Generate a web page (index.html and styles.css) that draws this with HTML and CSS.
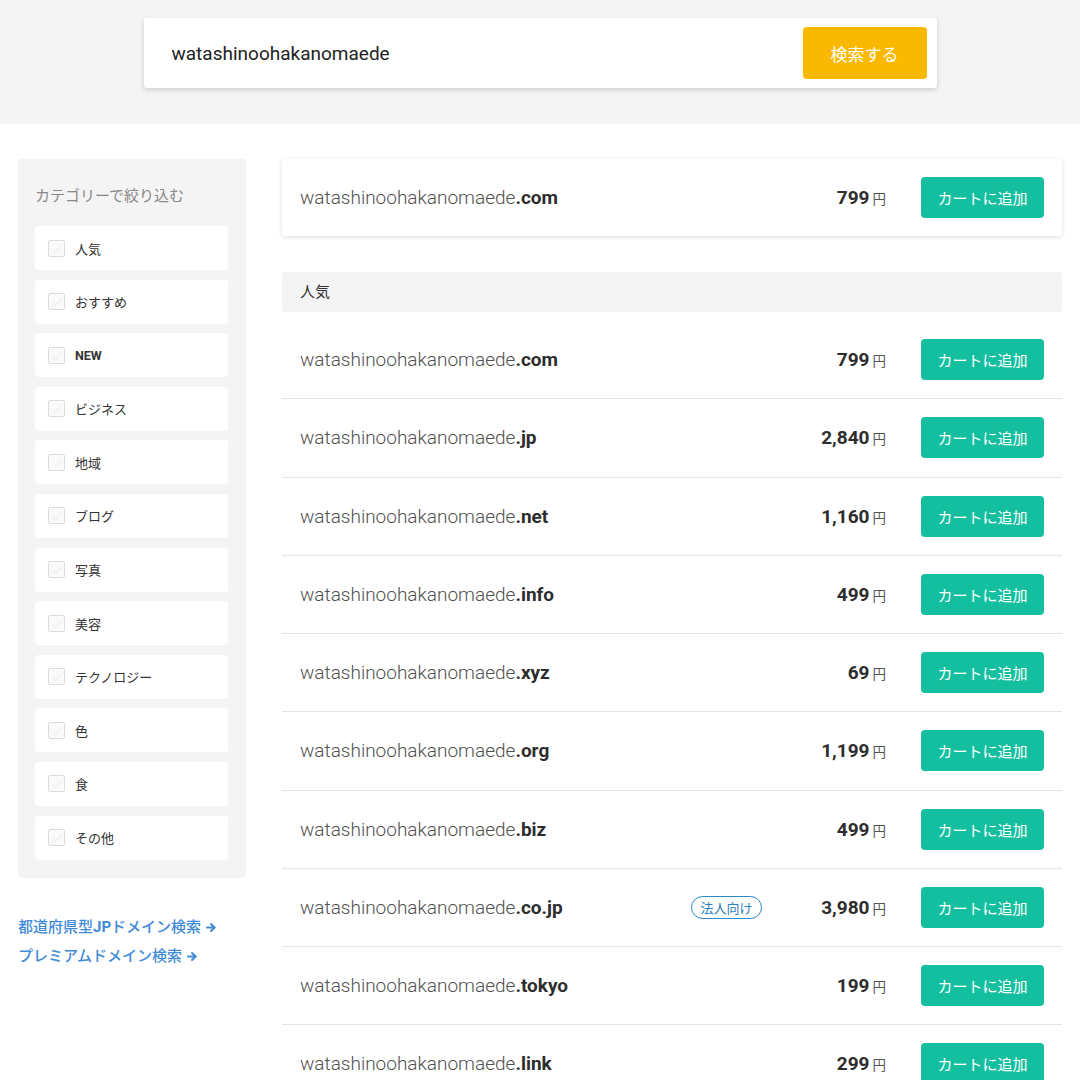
FILE: index.html
```html
<!DOCTYPE html>
<html lang="ja">
<head>
<meta charset="utf-8">
<link rel="stylesheet" href="styles.css">
</head>
<body>
<header class="top">
  <div class="search">
    <span class="query">watashinoohakanomaede</span>
    <button class="search-btn">検索する</button>
  </div>
</header>
<div class="layout">
  <aside class="side">
    <div class="filter">
      <div class="filter-title">カテゴリーで絞り込む</div>
      <ul class="cats">
        <li class="cat"><span class="cb"></span>人気</li>
        <li class="cat"><span class="cb"></span>おすすめ</li>
        <li class="cat bold"><span class="cb"></span>NEW</li>
        <li class="cat"><span class="cb"></span>ビジネス</li>
        <li class="cat"><span class="cb"></span>地域</li>
        <li class="cat"><span class="cb"></span>ブログ</li>
        <li class="cat"><span class="cb"></span>写真</li>
        <li class="cat"><span class="cb"></span>美容</li>
        <li class="cat"><span class="cb"></span>テクノロジー</li>
        <li class="cat"><span class="cb"></span>色</li>
        <li class="cat"><span class="cb"></span>食</li>
        <li class="cat"><span class="cb"></span>その他</li>
      </ul>
    </div>
    <div class="links">
      <a class="link">都道府県型<b>JP</b>ドメイン検索 <svg class="arr" viewBox="0 0 12 12" width="11" height="11"><path d="M1 6h8M5.5 2.2L9.5 6l-4 3.8" fill="none" stroke="currentColor" stroke-width="2.2" stroke-linecap="round" stroke-linejoin="round"/></svg></a>
      <a class="link">プレミアムドメイン検索 <svg class="arr" viewBox="0 0 12 12" width="11" height="11"><path d="M1 6h8M5.5 2.2L9.5 6l-4 3.8" fill="none" stroke="currentColor" stroke-width="2.2" stroke-linecap="round" stroke-linejoin="round"/></svg></a>
    </div>
  </aside>
  <main class="main">
    <div class="row featured">
      <div class="domain">watashinoohakanomaede<b>.com</b></div>
      <div class="price"><b>799</b><span class="yen">円</span></div>
      <button class="cart">カートに追加</button>
    </div>
    <div class="section">人気</div>
    <div class="list">
      <div class="row"><div class="domain">watashinoohakanomaede<b>.com</b></div><div class="price"><b>799</b><span class="yen">円</span></div><button class="cart">カートに追加</button></div>
      <div class="row"><div class="domain">watashinoohakanomaede<b>.jp</b></div><div class="price"><b>2,840</b><span class="yen">円</span></div><button class="cart">カートに追加</button></div>
      <div class="row"><div class="domain">watashinoohakanomaede<b>.net</b></div><div class="price"><b>1,160</b><span class="yen">円</span></div><button class="cart">カートに追加</button></div>
      <div class="row"><div class="domain">watashinoohakanomaede<b>.info</b></div><div class="price"><b>499</b><span class="yen">円</span></div><button class="cart">カートに追加</button></div>
      <div class="row"><div class="domain">watashinoohakanomaede<b>.xyz</b></div><div class="price"><b>69</b><span class="yen">円</span></div><button class="cart">カートに追加</button></div>
      <div class="row"><div class="domain">watashinoohakanomaede<b>.org</b></div><div class="price"><b>1,199</b><span class="yen">円</span></div><button class="cart">カートに追加</button></div>
      <div class="row"><div class="domain">watashinoohakanomaede<b>.biz</b></div><div class="price"><b>499</b><span class="yen">円</span></div><button class="cart">カートに追加</button></div>
      <div class="row"><div class="domain">watashinoohakanomaede<b>.co.jp</b></div><span class="badge">法人向け</span><div class="price"><b>3,980</b><span class="yen">円</span></div><button class="cart">カートに追加</button></div>
      <div class="row"><div class="domain">watashinoohakanomaede<b>.tokyo</b></div><div class="price"><b>199</b><span class="yen">円</span></div><button class="cart">カートに追加</button></div>
      <div class="row"><div class="domain">watashinoohakanomaede<b>.link</b></div><div class="price"><b>299</b><span class="yen">円</span></div><button class="cart">カートに追加</button></div>
    </div>
  </main>
</div>
</body>
</html>
```
FILE: styles.css
```css
* { box-sizing: border-box; }
html, body { margin: 0; padding: 0; background: #fff; }
body {
  font-family: Roboto, "Noto Sans CJK JP", sans-serif;
  color: #333;
  overflow: hidden;
  height: 1080px;
}
.top {
  background: #f4f4f4;
  height: 124px;
  padding-top: 18px;
}
.search {
  width: 793px;
  height: 70px;
  margin: 0 auto;
  background: #fff;
  border-radius: 3px;
  box-shadow: 0 2px 5px rgba(0,0,0,0.16);
  display: flex;
  align-items: center;
  padding: 0 10px 0 28px;
}
.query {
  flex: 1;
  font-size: 19px;
  color: #222;
}
.search-btn {
  width: 124px;
  height: 52px;
  border: 0;
  border-radius: 4px;
  background: #fbb800;
  color: #fff;
  font-family: Roboto, "Noto Sans CJK JP", sans-serif;
  font-size: 17px;
}
.layout {
  display: flex;
  gap: 36px;
  padding: 35px 18px 0 18px;
}
.side { width: 228px; flex: none; }
.filter {
  background: #f4f4f4;
  border-radius: 3px;
  padding: 26px 18px 18px 17px;
}
.filter-title {
  font-size: 15px;
  line-height: 22px;
  color: #888;
  margin-bottom: 19px;
}
.cats {
  list-style: none;
  margin: 0;
  padding: 0;
  display: flex;
  flex-direction: column;
  gap: 9.6px;
}
.cat {
  height: 44px;
  background: #fff;
  border-radius: 4px;
  display: flex;
  align-items: center;
  padding-left: 13px;
  font-size: 13px;
  color: #333;
}
.cat.bold { font-weight: 700; font-size: 12.5px; }
.cb {
  width: 17px;
  height: 17px;
  border: 1px solid #dcdcdc;
  border-radius: 2px;
  background: #fafafa;
  margin-right: 10px;
  position: relative;
}
.cb::after {
  content: "";
  position: absolute;
  left: 5px;
  top: 2px;
  width: 4px;
  height: 8px;
  border: solid #f3f3f3;
  border-width: 0 2px 2px 0;
  transform: rotate(45deg);
}
.links {
  margin-top: 35px;
  display: flex;
  flex-direction: column;
}
.link {
  font-size: 15px;
  line-height: 29px;
  color: #3f8bd8;
  font-weight: 500;
  display: flex;
  align-items: center;
}
.link b { font-weight: 700; }
.arr { margin-left: 5px; }
.main { width: 780px; flex: none; }
.row {
  display: flex;
  align-items: center;
  height: 78.25px;
  padding: 0 18px;
  border-bottom: 1px solid #e6e6e6;
}
.featured {
  height: 77px;
  border-bottom: 0;
  border-radius: 3px;
  box-shadow: 0 1px 5px rgba(0,0,0,0.14);
}
.domain {
  flex: 1;
  font-size: 19px;
  font-weight: 300;
  color: #505050;
}
.domain b { color: #2d2d2d; font-weight: 700; }
.price {
  width: 110px;
  text-align: right;
  margin-right: 35px;
  font-size: 19px;
  color: #2d2d2d;
}
.price b { font-weight: 700; }
.yen {
  font-size: 13.5px;
  color: #555;
  margin-left: 3px;
}
.cart {
  width: 123px;
  height: 41px;
  border: 0;
  border-radius: 4px;
  background: #14bf9f;
  color: #fff;
  font-family: Roboto, "Noto Sans CJK JP", sans-serif;
  font-size: 15px;
}
.section {
  margin-top: 36px;
  height: 40px;
  background: #f4f4f4;
  border-radius: 3px;
  padding-left: 18px;
  padding-bottom: 3px;
  display: flex;
  align-items: center;
  font-size: 15px;
  color: #333;
}
.list { margin-top: 9px; }
.badge {
  width: 71px;
  height: 23px;
  border: 1.5px solid #2a86c4;
  border-radius: 12px;
  color: #2a7fb8;
  font-size: 13px;
  display: flex;
  align-items: center;
  justify-content: center;
  margin-right: 14px;
}
```
